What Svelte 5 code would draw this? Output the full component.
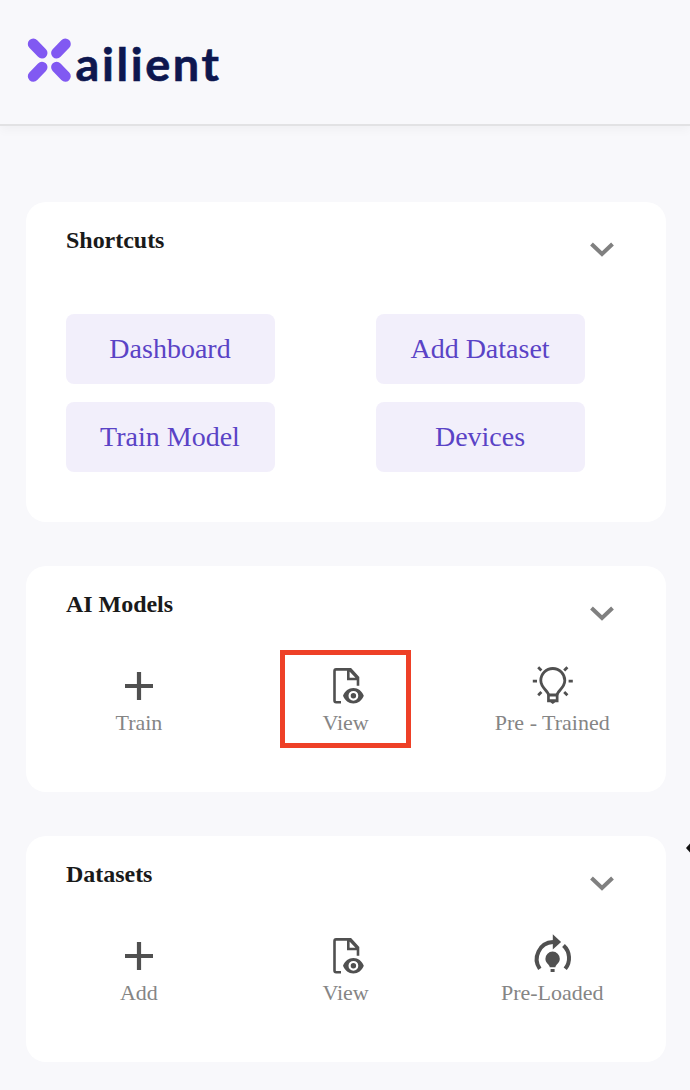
<script>
  const shortcuts = ['Dashboard', 'Add Dataset', 'Train Model', 'Devices'];
  const sections = [
    {
      title: 'AI Models',
      items: [
        { label: 'Train', icon: 'plus' },
        { label: 'View', icon: 'file', highlighted: true },
        { label: 'Pre - Trained', icon: 'bulb' }
      ]
    },
    {
      title: 'Datasets',
      items: [
        { label: 'Add', icon: 'plus' },
        { label: 'View', icon: 'file' },
        { label: 'Pre-Loaded', icon: 'reload' }
      ]
    }
  ];
</script>

{#snippet heading(title)}
  <div class="heading">
    <h2>{title}</h2>
    <svg class="chevron" width="28" height="20" viewBox="0 0 28 20">
      <path d="M3.5 4 14 14 24.5 4" fill="none" stroke="#808080" stroke-width="4" />
    </svg>
  </div>
{/snippet}

{#snippet icon(name)}
  <svg class="icon" width="44" height="44" viewBox="0 0 44 44">
    {#if name === 'plus'}
      <path d="M22 8v28M8 22h28" stroke="#505050" stroke-width="4.2" />
    {:else if name === 'file'}
      <path d="M17 38.2h-4.9a1.6 1.6 0 0 1-1.6-1.6V7a1.6 1.6 0 0 1 1.6-1.6h14.4l7.5 8.1v8.3M24.3 5.4v9.6H34M26 6l8 8.6" fill="none" stroke="#505050" stroke-width="2.6" />
      <path fill-rule="evenodd" fill="#505050" d="M19 31.8c2-4.8 5.6-7.7 10.4-7.7s8.4 2.9 10.4 7.7c-2 4.8-5.6 7.7-10.4 7.7s-8.4-2.9-10.4-7.7Zm10.4-4.9a4.9 4.9 0 1 0 0 9.8 4.9 4.9 0 0 0 0-9.8Z" />
      <circle cx="29.4" cy="31.8" r="2.7" fill="#505050" />
    {:else if name === 'bulb'}
      <g transform="translate(-.2 0)">
        <g fill="none" stroke="#505050">
          <path stroke-width="2.8" d="M18.8 31.2C18.6 26.8 11 24 11 16.5a12 12 0 0 1 24 0c0 7.5-7.6 10.3-7.8 14.7" />
          <path stroke-width="2.8" d="M3 17.2h4.2M38.8 17.2H43M8.4 3.2l3.2 3.2M37.6 3.2l-3.2 3.2M8.4 31.2l3.2-3.2M37.6 31.2l-3.2-3.2" />
        </g>
        <path fill-rule="evenodd" fill="#505050" d="M17.3 29.6h11.4v8.6h-3.2L23 40l-2.5-1.8h-3.2ZM20 32.4v2.8h6v-2.8Z" />
      </g>
    {:else}
      <g transform="translate(.5 0)">
        <path d="M9.3 34.8A17 17 0 0 1 22.5 8.1M33 11.5A17 17 0 0 1 34.7 34.8" fill="none" stroke="#505050" stroke-width="4" />
        <path d="M22.3.3 30.6 8.1 22.3 15.5ZM19.3 33.2c-.6-3-4.4-4-4.4-8.4a7.2 7.2 0 0 1 14.4 0c0 4.4-3.8 5.4-4.4 8.4ZM20.1 35h4v3h-4Z" fill="#505050" />
      </g>
    {/if}
  </svg>
{/snippet}

<div class="page">
  <header>
    <svg width="210" height="60" viewBox="20 30 210 60" role="img" aria-label="Xailient">
      <path d="m33.3 44 8.7 9M65.3 44l-8.7 9M33.3 76.2l8.7-9M65.3 76.2l-8.7-9" stroke="#8159f2" stroke-width="11" stroke-linecap="round" />
      <text x="75.5" y="80.8" textLength="146" lengthAdjust="spacingAndGlyphs">ailient</text>
    </svg>
  </header>

  <main>
    <section class="card shortcuts">
      {@render heading('Shortcuts')}
      <div class="buttons">
        {#each shortcuts as label}
          <button>{label}</button>
        {/each}
      </div>
    </section>

    {#each sections as section}
      <section class="card">
        {@render heading(section.title)}
        <div class="items">
          {#each section.items as item}
            <div class="item" class:highlighted={item.highlighted}>
              {@render icon(item.icon)}
              <span>{item.label}</span>
            </div>
          {/each}
        </div>
      </section>
    {/each}
  </main>
  <svg class="edge" width="4" height="10" viewBox="0 0 4 10"><path d="M4 .5 0 5l4 4.5Z" fill="#111" /></svg>
</div>

<style>
  :global(body) { margin: 0; background: #f8f8fb; }
  .page {
    position: relative;
    box-sizing: border-box;
    width: 690px;
    height: 1090px;
    overflow: hidden;
    background: #f8f8fb;
    font-family: "Liberation Serif", "Times New Roman", serif;
  }
  header {
    box-sizing: border-box;
    height: 126px;
    padding: 30px 20px;
    border-bottom: 2px solid #e2e2e4;
    box-shadow: 0 4px 10px rgba(0, 0, 0, 0.035);
  }
  header svg { display: block; }
  header text {
    font: 700 45px Lato, sans-serif;
    letter-spacing: 2.5px;
    fill: #0d174f;
    stroke: #0d174f;
    stroke-width: 0.6px;
  }
  main {
    display: flex;
    flex-direction: column;
    gap: 44px;
    padding: 76px 24px 0 26px;
  }
  .card {
    box-sizing: border-box;
    height: 226px;
    border-radius: 20px;
    background: #fff;
  }
  .shortcuts { height: 320px; }
  .heading {
    display: flex;
    justify-content: space-between;
    height: 84px;
    padding: 0 50px 0 40px;
  }
  .shortcuts .heading { height: 112px; }
  h2 {
    margin: 24px 0 0;
    font-size: 24px;
    line-height: 28px;
    letter-spacing: -0.03px;
    color: #1a1a1a;
  }
  .chevron { margin-top: 38px; }
  .buttons {
    display: grid;
    grid-template-columns: 209px 209px;
    grid-auto-rows: 70px;
    gap: 18px 101px;
    padding-left: 40px;
  }
  button {
    padding: 0 1px 0 0;
    border: 0;
    border-radius: 8px;
    background: #f2effb;
    color: #5a43c6;
    font: 28px "Liberation Serif", "Times New Roman", serif;
  }
  .items {
    display: grid;
    grid-template-columns: repeat(3, 1fr);
    justify-items: center;
    padding: 0 10.4px 0 9.6px;
  }
  .item {
    display: flex;
    flex-direction: column;
    align-items: center;
    box-sizing: border-box;
    width: 131px;
    height: 98px;
    padding-top: 14px;
    font-size: 22px;
    line-height: 26px;
    color: #858585;
    white-space: nowrap;
  }
  .highlighted { padding-top: 9px; border: 5px solid #ee4027; }
  .icon { flex: none; margin-bottom: 2px; }
  .edge { position: absolute; right: 0; top: 843px; }
</style>
